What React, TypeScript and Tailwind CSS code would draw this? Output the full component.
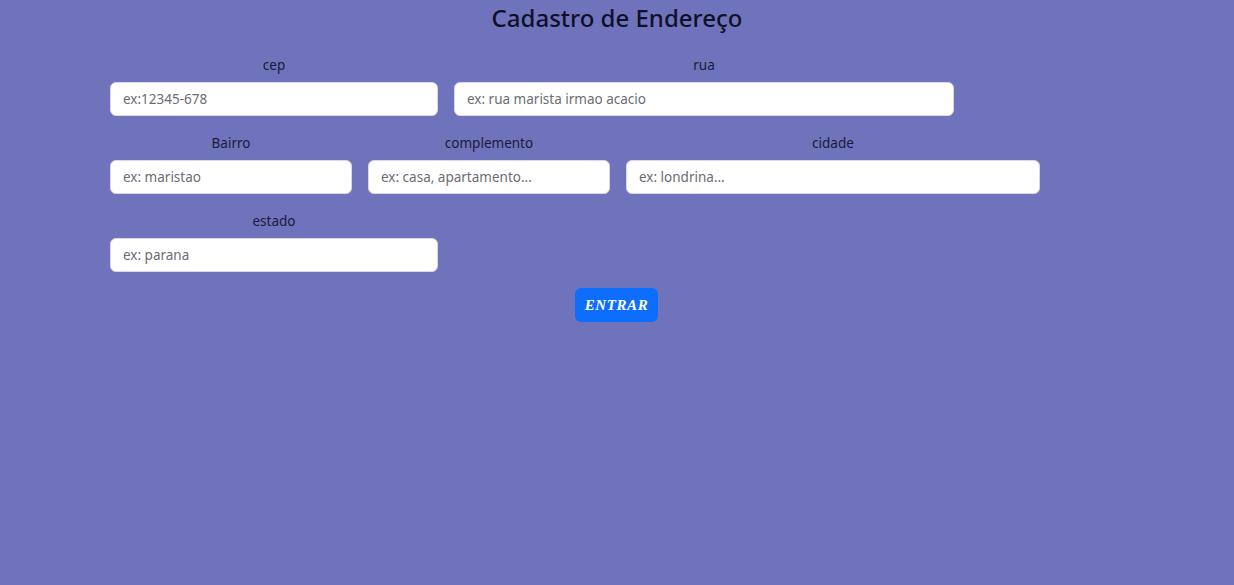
const fields = [
  { label: "cep", placeholder: "ex:12345-678", span: "col-span-4" },
  { label: "rua", placeholder: "ex: rua marista irmao acacio", span: "col-span-6" },
  { label: "", placeholder: "", span: "col-span-2" },
  { label: "Bairro", placeholder: "ex: maristao", span: "col-span-3" },
  { label: "complemento", placeholder: "ex: casa, apartamento...", span: "col-span-3" },
  { label: "cidade", placeholder: "ex: londrina...", span: "col-span-5" },
  { label: "", placeholder: "", span: "col-span-1" },
  { label: "estado", placeholder: "ex: parana", span: "col-span-4" },
];

export default function App() {
  return (
    <div
      className="min-h-[585px] w-full bg-[#6f73bc] text-[#1b1a3a]"
      style={{ fontFamily: '"Noto Sans", "Open Sans", sans-serif' }}
    >
      <h1 className="pt-[1px] text-center text-[24px] font-medium leading-[34px] text-[#101028]">
        Cadastro de Endereço
      </h1>

      <form
        className="ml-[102px] mt-[18px] grid w-[1032px] grid-cols-12 gap-y-[15px]"
        onSubmit={(e) => e.preventDefault()}
      >
        {fields.map((f, i) => (
          <div key={i} className={`${f.span} flex flex-col px-2`}>
            {f.label && (
              <>
                <label className="h-[24px] text-center text-[13.5px] leading-[24px]">
                  {f.label}
                </label>
                <input
                  placeholder={f.placeholder}
                  className="mt-[5px] h-[34px] w-full rounded-[6px] border border-[#d6d8e6] bg-white px-3 text-[13.5px] text-[#212529] outline-none placeholder:text-[#6c6c72]"
                />
              </>
            )}
          </div>
        ))}

        <div className="col-span-12 mt-[1px] flex justify-center pr-[3px]">
          <button
            type="submit"
            className="h-[34px] w-[83px] rounded-[6px] bg-[#0d6efd] text-[15px] font-bold italic tracking-[0.6px] text-white"
            style={{ fontFamily: '"Liberation Serif", serif' }}
          >
            ENTRAR
          </button>
        </div>
      </form>
    </div>
  );
}
